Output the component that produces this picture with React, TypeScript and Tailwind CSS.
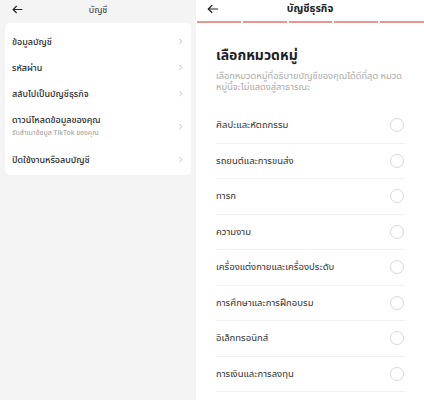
import React from "react";

const font = { fontFamily: '"Noto Sans", "Noto Sans Thai", "Liberation Sans", sans-serif' };

const BackArrow = ({ className = "" }: { className?: string }) => (
  <svg viewBox="0 0 24 24" className={className} fill="none" stroke="currentColor" strokeWidth={2} strokeLinecap="round" strokeLinejoin="round">
    <path d="M20 12H4" />
    <path d="M10 6l-6 6 6 6" />
  </svg>
);

const Chevron = () => (
  <svg viewBox="0 0 10 10" className="w-[7px] h-[7px] text-[#b5b5b5]" fill="none" stroke="currentColor" strokeWidth={1.2}>
    <path d="M3.5 1.5L7 5l-3.5 3.5" />
  </svg>
);

const accountItems = [
  { title: "ข้อมูลบัญชี" },
  { title: "รหัสผ่าน" },
  { title: "สลับไปเป็นบัญชีธุรกิจ" },
  { title: "ดาวน์โหลดข้อมูลของคุณ", sub: "รับสำเนาข้อมูล TikTok ของคุณ" },
  { title: "ปิดใช้งานหรือลบบัญชี" },
];

const categories = [
  "ศิลปะและหัตถกรรม",
  "รถยนต์และการขนส่ง",
  "ทารก",
  "ความงาม",
  "เครื่องแต่งกายและเครื่องประดับ",
  "การศึกษาและการฝึกอบรม",
  "อิเล็กทรอนิกส์",
  "การเงินและการลงทุน",
];

const App = () => {
  return (
    <div className="flex w-[424px] h-[400px] overflow-hidden bg-white" style={font}>
      {/* Left: account settings */}
      <div className="w-[196px] h-full bg-[#f4f4f4] px-[5px]">
        <div className="relative h-[23px] flex items-center justify-center">
          <BackArrow className="absolute left-[6px] top-[3px] w-[13px] h-[13px] text-[#222]" />
          <span className="text-[9px] text-[#333] -mt-[4px]">บัญชี</span>
        </div>
        <div className="bg-white rounded-[5px] pt-[5px] pb-[3px] px-[7px]">
          {accountItems.map((it) => (
            <div
              key={it.title}
              className={`flex items-center justify-between ${it.sub ? "h-[40px]" : "h-[26px]"}`}
            >
              <div className="flex flex-col">
                <span className="text-[9px] font-medium text-[#2b2b2b] leading-[13px]">{it.title}</span>
                {it.sub && (
                  <span className="text-[7px] text-[#999] leading-[12px] mt-[1px]">{it.sub}</span>
                )}
              </div>
              <Chevron />
            </div>
          ))}
        </div>
      </div>

      {/* Right: business account category */}
      <div className="flex-1 h-full bg-white">
        <div className="relative h-[21px] flex items-center justify-center">
          <BackArrow className="absolute left-[10px] top-[2px] w-[14px] h-[14px] text-[#222]" />
          <span className="text-[10.5px] font-bold text-[#222] -mt-[3px]">บัญชีธุรกิจ</span>
        </div>
        <div className="flex gap-[2px] h-[2px] pl-[1px]">
          <div className="flex-1 bg-[#e8978f]" />
          <div className="flex-1 bg-[#e8978f]" />
          <div className="flex-1 bg-[#e8978f]" />
          <div className="flex-1 bg-[#e8978f]" />
          <div className="flex-1 bg-[#e8978f]" />
        </div>
        <div className="pl-[20px] pr-[19px] pt-[21px]">
          <div className="text-[14px] font-bold text-[#1f1f1f] leading-[22px]">เลือกหมวดหมู่</div>
          <div className="text-[9.3px] text-[#aaa] leading-[11px] mt-[4px] -mr-[8px]">
            เลือกหมวดหมู่ที่อธิบายบัญชีของคุณได้ดีที่สุด หมวดหมู่นี้จะไม่แสดงสู่สาธารณะ
          </div>
          <div className="mt-[16px]">
            {categories.map((c) => (
              <div key={c} className="h-[35.5px] flex items-center justify-between border-b border-[#f1f1f1]">
                <span className="text-[9.5px] text-[#333]">{c}</span>
                <span className="w-[14px] h-[14px] rounded-full border border-[#d9d9d9] mr-[1px]" />
              </div>
            ))}
          </div>
        </div>
      </div>
    </div>
  );
};

export default App;
